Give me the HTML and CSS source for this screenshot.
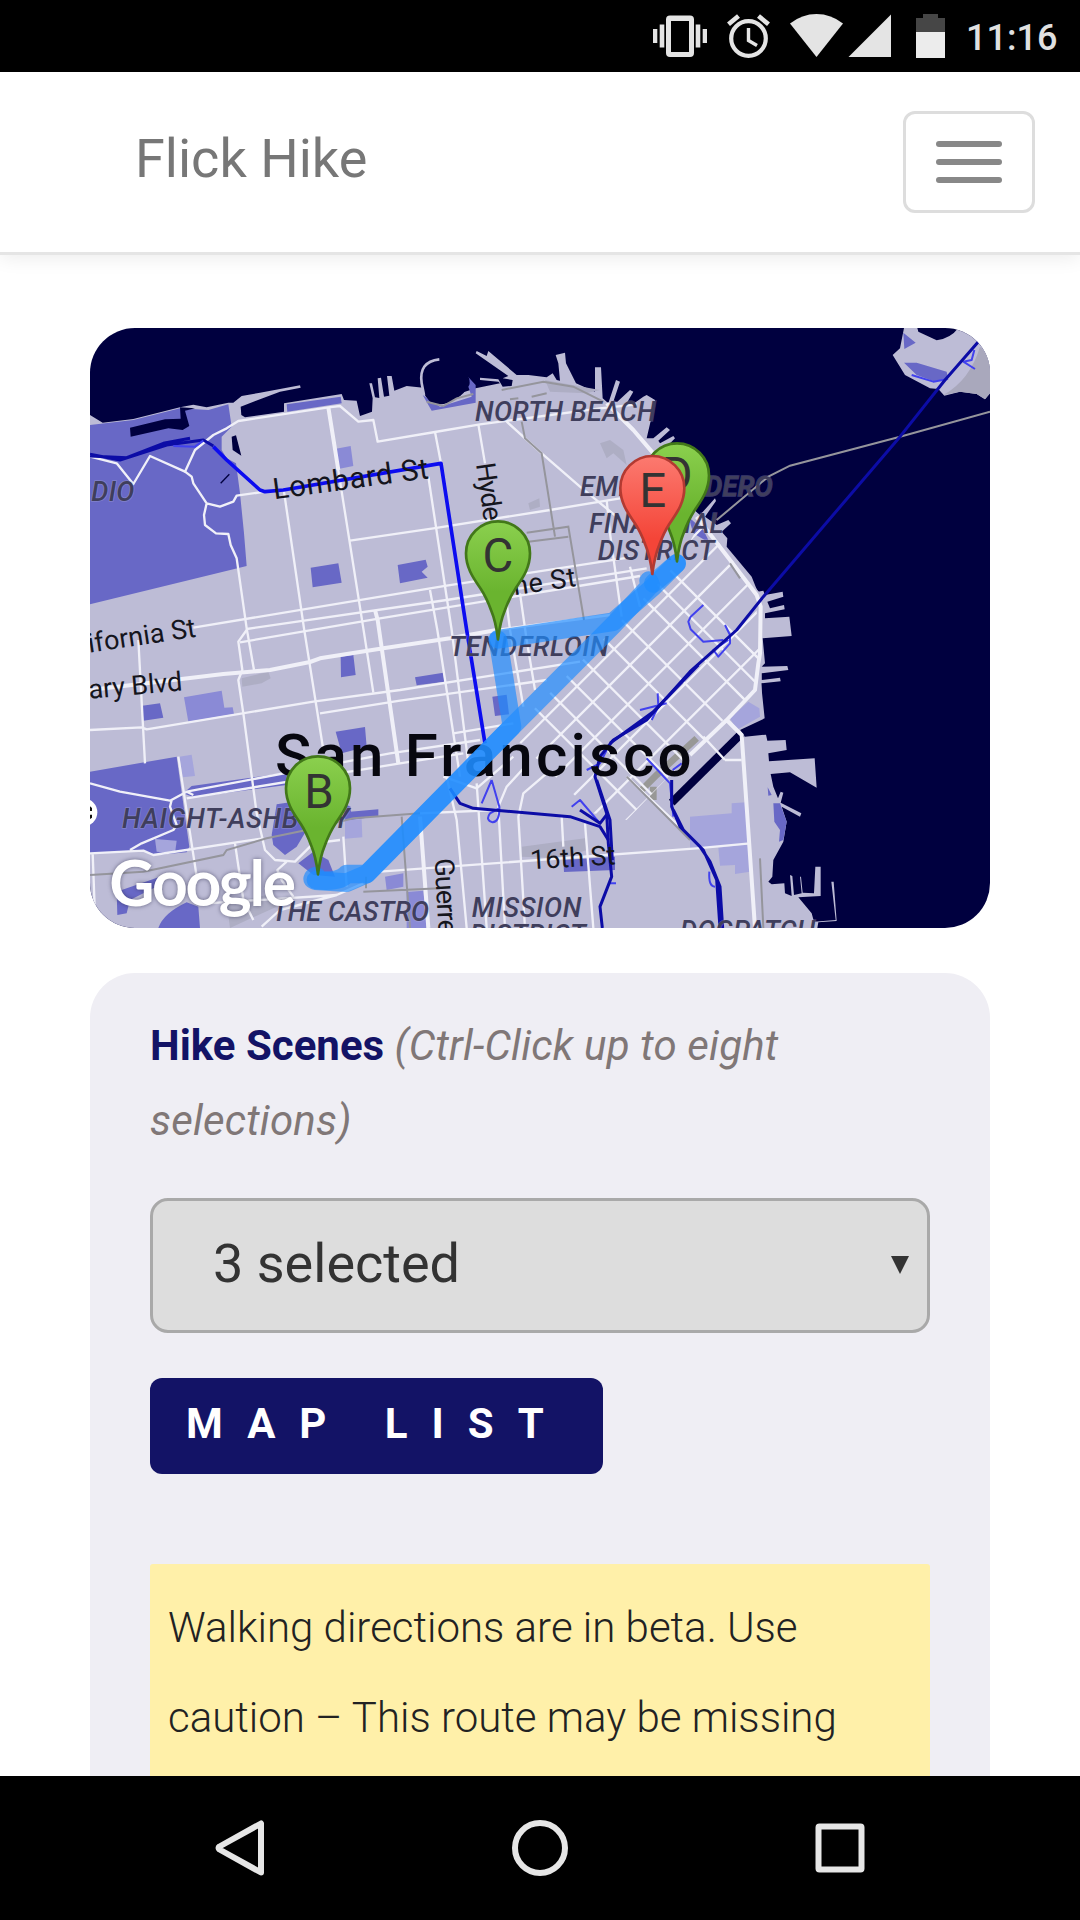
FILE: index.html
```html
<!DOCTYPE html>
<html lang="en">
<head>
<meta charset="utf-8">
<title>Flick Hike</title>
<link rel="stylesheet" href="styles.css">
</head>
<body>
<div class="screen">
  <div class="status-bar">
    <svg class="status-icons" viewBox="650 0 300 72" aria-hidden="true">
      <g fill="#e4e4e4">
        <path fill-rule="evenodd" d="M670 15.500h20q4 0 4 4v33.500q0 4-4 4h-20q-4 0-4-4v-33.500q0-4 4-4zM671 21v31h18v-31z"/>
        <path d="M653 29h4.300v14H653zM659.700 24.500h4.600v23h-4.600zM695.700 24.500h4.600v23h-4.600zM702.700 29h4.300v14h-4.300z"/>
        <circle cx="748.500" cy="38.500" r="17.300" fill="none" stroke="#e4e4e4" stroke-width="4.200"/>
        <path d="M748.500 28v12.500l8.500 5" fill="none" stroke="#e4e4e4" stroke-width="3.400"/>
        <path d="M728.500 24.300l10-8.300M768.500 24.300l-10-8.300" fill="none" stroke="#e4e4e4" stroke-width="4.600"/>
        <path d="M816.500 57L790 23.500Q802 14 816.500 14T843 23.500z"/>
        <path d="M848.500 57L891 14.500V57z"/>
        <path d="M916 32V18h7v-4h15v4h7v14z" fill="#464646"/>
        <path d="M916 32h29v26h-29z" fill="#ececec"/>
      </g>
    </svg>
    <span class="clock">11:16</span>
  </div>

  <header class="navbar">
    <a class="brand">Flick Hike</a>
    <button class="toggle" aria-label="Menu"><span></span><span></span><span></span></button>
  </header>

  <main class="content">
    <svg class="map" viewBox="30 24 2700 1800">
      <defs>
        <linearGradient id="green" x1="0" y1="0" x2="0" y2="1"><stop offset="0" stop-color="#8bd04e"/><stop offset=".6" stop-color="#6ab42f"/></linearGradient>
        <linearGradient id="red" x1="0" y1="0" x2="0" y2="1"><stop offset="0" stop-color="#fc7a70"/><stop offset=".7" stop-color="#f44538"/></linearGradient>
        <path id="pin" d="M0 258C-4 225-10 196-21 170C-31 143-38 128-51 108C-66 84-96 50-96 0A96 96 0 0 1 96 0C96 50 66 84 51 108C38 128 31 143 21 170C10 196 4 225 0 258z"/>
        <clipPath id="soma"><path d="M1330 1200L1740 785 1800 720 1865 600 2025 810 2040 1000 2030 1105 1930 1200 1640 1500 1540 1480 1290 1240z"/></clipPath>
      </defs>
      <rect x="30" y="24" width="2700" height="1800" fill="#00003f"/>

      <!-- Land -->
      <g fill="#bdbcd6">
        <path d="M30 285L68 308 160 297 300 262 340 254 380 262 445 248 460 248 485 228 540 218 660 196 662 203 600 215 482 260 484 285 495 292 612 275 612 250 785 222 792 240 830 242 840 288 876 275 878 235 868 190 876 190 885 232 898 234 893 175 903 173 912 230 928 227 921 168 935 168 943 212 980 198 1030 203 1080 240 1187 205 1260 190 1255 185 1200 180V173L1255 178 1268 200 1295 198 1298 180 1268 175 1285 168 1187 100 1190 93 1220 108 1225 93 1310 165 1345 165 1400 172 1418 160 1430 180 1440 182 1435 130 1427 105 1455 98 1458 130 1488 190 1545 215V142H1563L1568 235 1585 250 1608 180 1620 185 1600 245H1612L1650 210 1660 215 1640 250 1655 255 1690 230 1700 225 1725 240 1715 290 1700 355H1720L1760 322 1770 330 1735 362 1740 370 1780 348 1785 355 1760 380 1850 580 2040 820 2045 1120 1980 1230 2000 1300V1824H30z"/>
        <path transform="translate(1830)" d="M0 560L30 585 75 535 78 543 45 590 80 615 115 600 123 610 95 635 112 655 110 680 185 770 203 815 220 812 225 825 278 815 280 830 232 845 240 865 282 855 284 868 225 880V895L298 890 305 948 218 955H0z"/>
        <path transform="translate(1830 900)" d="M0 0H218V55L225 130 215 140 292 138 295 150 215 160V180L270 173 272 184 213 190 224 295 150 330 165 350 228 344 232 362 287 360 290 390 235 400 237 424 374 415 380 503 300 457 242 462 250 500 264 535 272 515 280 518 272 548 334 580 330 590 275 560 290 605 280 665 250 720 247 770 235 785 245 793 283 790 285 820 305 828 300 765 307 768 312 825 335 820 330 770H333L338 818 372 820 376 740H392V828L325 832 365 880 372 905 437 900 424 785H431L440 903 385 907 382 924H0z"/>
        <path d="M2472 24L2460 85 2438 105 2475 165 2550 205 2575 207 2593 227 2640 215 2690 222 2715 238 2730 220V24H2635Q2612 55 2570 61L2515 35 2512 24z"/>
      </g>
      <path d="M2700 80Q2670 180 2590 225L2640 215 2690 222 2715 238 2730 220V110z" fill="#a9a8bc"/>
      <path d="M1028 225L1055 272 1187 248V195L1150 155 1175 230 1080 260z" fill="#6868c6"/>
      <path d="M1135 140Q1175 165 1168 195 1150 225 1130 235 1085 265 1050 245 1020 215 1023 170 1035 130 1078 118L1085 95z" fill="#00003f"/>
      <path d="M1078 118Q1015 125 1025 190L1032 225" fill="none" stroke="#bdbcd6" stroke-width="8"/>
      <path d="M1985 1240L1775 1448" stroke="#00003f" stroke-width="24"/>

      <!-- Parks -->
      <g fill="#6868c6">
        <path d="M30 315L160 300 300 265 385 270 445 253 455 320 425 350V390L440 415 468 430 480 520 492 640 500 738 30 853z"/>
        <path d="M620 253L782 230 785 250 622 275zM692 743L775 730 785 788 698 802zM953 735L1037 719 1043 740 1025 755 1043 773 960 790z"/>
        <path d="M782 1010L820 1005 827 1065 783 1072zM187 1157L240 1150 250 1193 190 1202zM767 1235L855 1221 860 1280 785 1300zM1005 1072L1090 1058 1093 1085 1010 1096zM1237 1130L1280 1124 1287 1183 1245 1188z"/>
        <path d="M30 1355L290 1310 328 1580 320 1597 230 1605 190 1592 30 1600zM310 1420L335 1398 620 1358V1395L340 1432z"/>
        <path d="M590 1453L640 1445 680 1530 650 1580 615 1605 580 1575 575 1545zM655 1630L700 1595 745 1620 765 1670 700 1665zM810 1475L895 1468V1488L815 1500zM790 1450L812 1460 815 1500 795 1505z"/>
        <path d="M110 1715L240 1670 250 1690 150 1740 140 1780 112 1785zM235 1824Q250 1780 320 1747L355 1760 360 1824zM1450 1620L1605 1610 1605 1650 1452 1656z"/>
        <path d="M2470 38L2507 68 2473 87zM2472 128L2510 128 2600 155 2605 180 2560 183 2510 165zM1825 590L1870 630 1890 670 1840 640zM2080 1450L2100 1450 2120 1505 2110 1560 2097 1565 2100 1530 2083 1505zM2063 1402L2075 1425 2065 1427z"/>
      </g>
      <g fill="#8a8ad6">
        <path d="M312 1132L425 1112 433 1163 458 1162 462 1182 325 1205zM768 386L812 378 820 438 775 447zM980 1716V1824H1040L1030 1712zM915 1670L970 1660V1700L920 1710z"/>
        <path d="M298 1310L335 1304 345 1368 308 1372zM795 1500L845 1498 847 1552 795 1556zM1950 1195L2005 1145 2038 1165 2040 1190 1970 1230zM1830 1490L1955 1480V1450L2000 1447 2010 1570 1830 1588zM1915 1583L2010 1572V1655L1965 1662V1635L1920 1637z" fill="#a5a5dc"/>
        <path d="M225 1557L290 1562 285 1600 230 1595z" fill="#a5a5dc"/>
      </g>
      <g fill="#aeaec4">
        <path d="M485 1075L565 1055 572 1075 545 1090 487 1100zM1560 370L1590 360 1630 390 1640 435 1600 400 1580 415zM1345 550L1378 535 1380 560 1350 570zM1395 180L1560 210 1520 220 1410 215zM1325 1580L1515 1555 1520 1590 1450 1615 1325 1610zM440 1750L560 1725 590 1760 450 1824z"/>
      </g>
      <path d="M150 323L255 298 302 296 300 262 345 265 315 272 328 318 308 330 265 325 152 350zM455 350L468 346 484 407 458 390z" fill="#00003f"/>
      <path d="M422 490L448 463" stroke="#00003f" stroke-width="4"/>
      <path d="M1685 1410L1730 1365 1850 1255M1720 1400V1440" stroke="#989896" stroke-width="20" fill="none"/>

      <!-- Streets -->
      <g class="street">
        <path d="M30 410L110 430 160 492 210 408 315 455 345 390 400 345 440 325 475 303 745 262 780 258 835 305 880 300 893 365 1065 336 1200 313 1300 300 1560 265 1670 253"/>
        <path d="M315 455L335 470 340 490 380 550 420 560 460 545 470 527 555 515M380 550L372 585 375 615 408 640 445 642 452 675 470 715 500 925 522 1050"/>
        <path d="M612 515L672 925 730 1290M745 262L850 925 880 1118M810 662L1060 625 1410 570 1620 535"/>
        <path d="M340 923L1100 797 1650 712M500 927L1100 840 1700 745M480 967L900 895 1680 768"/>
        <path d="M500 930L475 965 487 1050 475 1080 490 1180 530 1480 555 1590 585 1620 645 1625 700 1570 780 1560"/>
        <path d="M30 1230L185 1222 200 1228 700 1145 960 1110 1500 1025M720 1180L960 1142 1400 1080M175 960L195 1330"/>
        <path d="M1065 336L1083 430M1045 470L1115 930 1165 1330M1195 313L1215 430M1280 850L1290 930 1330 1160M1320 820L1340 960 1365 1110M1050 810L1072 930 1140 1370"/>
        <path d="M1580 540L1590 640 1625 890M1650 740L1680 860M1120 1240L1300 1210M1250 930L1590 885"/>
        <path d="M1280 305L1385 400 1500 500 1610 590"/>
        <path d="M30 1390L120 1415 270 1442 320 1415 340 1425M320 1415L930 1300 1200 1260M320 1435L960 1330 1150 1300M275 1440L270 1460 290 1515 280 1530 185 1570 150 1590M30 1600L190 1592 220 1605 550 1555M295 1310L350 1670M38 1600L45 1790M465 1570L490 1740 520 1800"/>
        <path d="M620 1625L592 1650 605 1680 640 1730M790 1550L800 1700M545 1820L600 1770 770 1725 850 1690M380 1750L770 1725"/>
        <path d="M900 1655L1850 1585 2010 1570M1020 1480L1250 1470"/>
        <path d="M1100 1370L1130 1500 1160 1824M1190 1390L1220 1824M1335 1340L1280 1400 1255 1460 1275 1824M1400 1360L1330 1420 1315 1490 1335 1824M1445 1490L1450 1580M1515 1510L1540 1824M1640 1370L1800 1520"/>
        <path d="M1090 1370L1190 1405 1300 1310M1935 1320L1985 1320M1870 1250L1935 1320"/>
      </g>
      <g class="street" clip-path="url(#soma)">
        <path d="M1000 800L2100 1900M1000 708L2100 1808M1000 608L2100 1708M1000 510L2100 1610M1000 385L2100 1485M1000 275L2100 1375M1000 145L2100 1245M1000 60L2100 1160M1000 -20L2100 1080"/>
        <path d="M1300 1190L2100 390M1300 1290L2100 490M1300 1385L2100 585M1300 1497L2100 697M1300 1607L2100 807M1300 1725L2100 925M1300 1840L2100 1040"/>
      </g>
      <g class="street avenue">
        <path d="M30 1110L430 1062 570 1050 690 1026 720 1015 910 985 1110 955 1250 930M885 870L893 900 955 1330M745 262L775 450M1020 1490L1045 1824"/>
        <path d="M1580 250L1660 330 1720 400M1850 590L1950 720 2030 825 2042 860 2040 1000 2035 1030 2025 1110 1940 1200 1830 1305M1940 1200L1985 1245 2000 1460 2025 1824"/>
      </g>
      <g class="rail">
        <path d="M30 1665L190 1655 430 1605 440 1590 560 1555 680 1530 820 1495 1020 1480M850 1715L1080 1705M965 1490L990 1824M858 1670V1705"/>
        <path d="M1325 305L1335 355 1385 400 1425 650M1340 638L1465 620 1512 900M1345 665L1465 650M1265 210L1390 185 1480 200 1570 245M1355 230L1400 220M1290 238L1315 235M1040 245L1090 258 1130 235 1180 222M1950 730L1980 775M1830 1560L1640 1370M2040 1615L2050 1824M2730 275L2460 350 2130 437 2065 470 1910 600"/>
      </g>

      <!-- Freeways -->
      <g class="freeway">
        <path d="M400 380L440 420 540 510 555 515 610 510 1083 430 1160 930 1215 1270"/>
        <path class="deck" d="M30 403L120 420 260 375 370 360 400 378M30 408L140 413 250 370 330 355"/>
        <path class="thin" d="M280 378L345 380 370 362M1235 1380L1205 1450M1235 1380L1258 1460Q1260 1505 1238 1507 1215 1500 1230 1480L1258 1465M1700 1315L1770 1390 1780 1490M1680 1170L1760 1150M1733 1120L1735 1160 1715 1200M1870 855L1832 890 1825 905 1832 928 1870 965 1930 960M1935 915L1950 945V970L1915 1010 1900 990 1945 960M1520 1350L1560 1330 1580 1290M1475 1460L1500 1440 1560 1510M2683 90L2675 120 2650 125 2685 147M2495 165L2560 185 2600 178"/>
        <path class="thin" d="M1888 1655Q1885 1700 1905 1700M1608 1690L1590 1690M1778 1350L1805 1330"/>
        <path class="deck" d="M2695 65L2595 180 2460 350 2050 830 1970 930 1830 1055 1700 1200 1600 1260 1560 1310 1545 1370 1580 1480 1585 1570 1595 1670 1560 1760 1567 1824"/>
        <path class="deck" d="M1855 1035L1720 1175 1590 1270M1550 1380L1590 1500 1597 1620M1110 1405L1140 1450 1180 1465 1470 1490 1560 1520 1585 1560M1500 1470L1560 1510 1583 1480M1775 1380L1775 1460 1800 1520 1860 1580 1890 1625 1920 1700 1928 1824M1780 1470L1810 1530 1870 1590 1910 1680 1920 1824"/>
      </g>

      <!-- Map labels -->
      <g class="area">
        <text x="34" y="543" textLength="129">DIO</text>
        <text x="1185" y="303" textLength="542">NORTH BEACH</text>
        <text x="1500" y="528" textLength="578">EMBARCADERO</text>
        <text x="1527" y="640" textLength="404">FINANCIAL</text>
        <text x="1553" y="720" textLength="350">DISTRICT</text>
        <text x="1108" y="1008" textLength="478">TENDERLOIN</text>
        <text x="126" y="1524" textLength="682">HAIGHT-ASHBURY</text>
        <text x="575" y="1802" textLength="472">THE CASTRO</text>
        <text x="1175" y="1792" textLength="329">MISSION</text>
        <text x="1170" y="1873" textLength="348">DISTRICT</text>
        <text x="1800" y="1860" textLength="406">DOGPATCH</text>
      </g>
      <g class="road-name">
        <text class="wide" transform="translate(583 538) rotate(-7.800)" textLength="470">Lombard St</text>
        <text transform="translate(28 998) rotate(-8.500)" textLength="326">ifornia St</text>
        <text transform="translate(28 1136) rotate(-5)" textLength="282">ary Blvd</text>
        <text transform="translate(1188 432) rotate(82)" textLength="175">Hyde</text>
        <text transform="translate(1230 837) rotate(-8.500)" textLength="263">Pine St</text>
        <text transform="translate(1352 1648) rotate(-3.500)" textLength="256">16th St</text>
        <text transform="translate(1064 1616) rotate(87)" textLength="295">Guerrero</text>
      </g>
      <text class="city" x="585" y="1368" textLength="1250">San Francisco</text>
      <circle cx="10" cy="1477" r="42" fill="#fff"/>
      <path d="M30 1459L36 1464V1473H30M30 1484H36V1493L30 1497" fill="#111"/>

      <!-- Hike route -->
      <g class="route">
        <path d="M708 1668Q690 1675 705 1682L800 1688 860 1662 1296 1220 1254 960"/>
        <path d="M1254 958L1600 905 1720 800 1790 730"/>
        <path d="M1790 730L1720 790"/>
        <path d="M1706 782L1712 795 1600 915 1296 1220 860 1662H800Q780 1688 708 1680"/>
      </g>

      <text class="google" x="88" y="1757" textLength="560">Google</text>

      <g class="pins">
        <g transform="translate(1254 700)"><use href="#pin" fill="url(#green)" stroke="#427819"/><text y="56">C</text></g>
        <g transform="translate(714 1405)"><use href="#pin" fill="url(#green)" stroke="#427819"/><text x="3" y="58">B</text></g>
        <g transform="translate(1791 466)"><use href="#pin" fill="url(#green)" stroke="#427819"/><text y="48">D</text></g>
        <g transform="translate(1717 504)"><use href="#pin" fill="url(#red)" stroke="#b33a31"/><text x="1" y="58">E</text></g>
      </g>
    </svg>

    <section class="panel">
      <p class="label"><strong>Hike Scenes</strong> <em>(Ctrl-Click up to eight selections)</em></p>
      <div class="select"><span>3 selected</span><i class="caret"></i></div>
      <button class="map-list">MAP LIST</button>
      <p class="warning">Walking directions are in beta. Use caution – This route may be missing</p>
    </section>
  </main>

  <nav class="system-nav">
    <svg viewBox="0 0 1080 144" fill="none" stroke="#e6e6e6" stroke-width="6" stroke-linejoin="round" aria-hidden="true">
      <path d="M261 47.500V96.500L219.500 73.500Q217.500 72 219.500 70.500z"/>
      <circle cx="540" cy="72" r="25"/>
      <rect x="818.500" y="50.500" width="43" height="43" rx="1"/>
    </svg>
  </nav>
</div>
</body>
</html>
```
FILE: styles.css
```css
* { box-sizing: border-box; }

body {
  margin: 0;
  background: #fff;
  font-family: Roboto, "Liberation Sans", sans-serif;
}

.screen {
  display: flex;
  flex-direction: column;
  width: 1080px;
  height: 1920px;
  overflow: hidden;
}

.status-bar {
  flex: none;
  display: flex;
  justify-content: flex-end;
  align-items: center;
  height: 72px;
  padding-right: 24px;
  background: #000;
}
.status-icons { width: 300px; height: 72px; }
.clock {
  width: 106px;
  padding: 4px 0 0 16px;
  color: #e0e0e0;
  font-size: 36px;
  font-weight: 500;
  white-space: nowrap;
}

.navbar {
  flex: none;
  display: flex;
  justify-content: space-between;
  align-items: center;
  height: 183px;
  padding: 0 45px 0 135px;
  border-bottom: 3px solid #e5e5e5;
  box-shadow: 0 3px 18px rgba(0, 0, 0, .08);
}
.brand {
  margin-top: -8px;
  color: #777;
  font-size: 54px;
}
.toggle {
  display: flex;
  flex-direction: column;
  justify-content: center;
  align-items: center;
  gap: 12px;
  width: 132px;
  height: 102px;
  padding: 0;
  background: #fff;
  border: 3px solid #ddd;
  border-radius: 12px;
}
.toggle span {
  width: 66px;
  height: 6px;
  border-radius: 3px;
  background: #888;
}

.content {
  flex: 1;
  display: flex;
  flex-direction: column;
  gap: 45px;
  min-height: 0;
  padding: 73px 90px 0;
  overflow: hidden;
}

.map {
  flex: none;
  display: block;
  width: 900px;
  height: 600px;
  border-radius: 45px;
}
.street { fill: none; stroke: #f0f0f8; stroke-width: 7; stroke-linejoin: round; }
.avenue { stroke-width: 12; }
.rail { fill: none; stroke: #95959c; stroke-width: 6; }
.freeway { fill: none; stroke: #0c0cf0; stroke-width: 11; stroke-linejoin: round; }
.freeway .deck { stroke: #0c0ca6; stroke-width: 9; }
.freeway .thin { stroke: #4141ee; stroke-width: 6; }
.area {
  fill: #3f3e5c;
  stroke: #bdbcd6;
  stroke-opacity: .3;
  stroke-width: 5;
  paint-order: stroke;
  font-size: 81px;
  font-style: italic;
  font-weight: 500;
}
.road-name { fill: #15151d; font-size: 81px; }
.road-name .wide { font-size: 88px; }
.city { fill: #07070f; font-size: 180px; font-weight: 500; }
.route path {
  fill: none;
  stroke: #1e8cff;
  stroke-opacity: .67;
  stroke-width: 56;
  stroke-linecap: round;
  stroke-linejoin: round;
}
.google {
  fill: #fff;
  font-family: Lato, sans-serif;
  font-size: 187px;
  font-weight: 700;
  filter: drop-shadow(0 0 7px rgba(40, 40, 70, .6));
}
.pins use { stroke-width: 8; stroke-linejoin: round; }
.pins text { fill: #333; font-size: 142px; text-anchor: middle; }

.panel {
  flex: 1;
  padding: 35px 60px 0;
  background: #efeef4;
  border-radius: 45px 45px 0 0;
}
.label {
  margin: 0 0 40px;
  font-size: 42px;
  line-height: 75px;
}
.label strong { color: #131366; }
.label em { color: #807777; letter-spacing: .18px; }

.select {
  display: flex;
  justify-content: space-between;
  align-items: center;
  height: 135px;
  padding: 0 18px 4px 60px;
  background: #ddd;
  border: 3px solid #a9a9a9;
  border-radius: 18px;
  color: #333;
  font-size: 54px;
}
.caret {
  margin-top: 2px;
  border: solid transparent;
  border-width: 18px 9px 0;
  border-top-color: #333;
}

.map-list {
  display: block;
  height: 96px;
  margin: 45px 0 90px;
  padding: 0 35px 5px 36px;
  background: #131366;
  border: 0;
  border-radius: 12px;
  color: #fff;
  font: 700 42px Roboto, sans-serif;
  letter-spacing: 24px;
  white-space: nowrap;
}

.warning {
  height: 300px;
  margin: 0;
  padding: 19px 18px;
  background: #fff0a9;
  border-radius: 3px;
  color: #222;
  font-size: 42px;
  font-weight: 300;
  line-height: 90px;
}

.system-nav { flex: none; height: 144px; background: #000; }
.system-nav svg { display: block; width: 1080px; height: 144px; }
```
